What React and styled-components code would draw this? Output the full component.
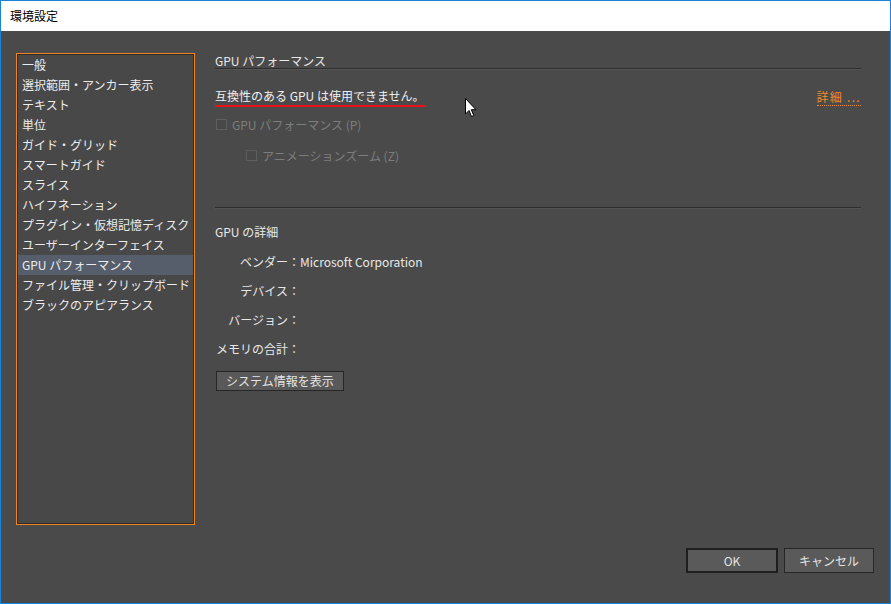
import React from 'react';
import styled, { createGlobalStyle } from 'styled-components';

const GlobalStyle = createGlobalStyle`
  html, body {
    margin: 0;
    padding: 0;
    background: #ffffff;
  }
  body {
    font-family: "Noto Sans CJK JP", "Noto Sans", sans-serif;
    font-size: 12px;
  }
`

const Window = styled.div`
  position: relative;
  box-sizing: border-box;
  width: 891px;
  height: 604px;
  border: 1px solid #1883d7;
  display: flex;
  flex-direction: column;
  background: #4a4a4a;
`

const TitleBar = styled.div`
  height: 30px;
  flex: none;
  background: #ffffff;
  color: #000000;
  display: flex;
  align-items: center;
  padding-left: 9px;
  font-size: 12px;
  line-height: 16px;
`

const Body = styled.div`
  flex: 1;
  display: flex;
  flex-direction: column;
  padding: 22px 15px 0 15px;
  color: #e8e8e8;
`

const Top = styled.div`
  display: flex;
  gap: 20px;
`

const Sidebar = styled.div`
  box-sizing: border-box;
  width: 179px;
  height: 472px;
  border: 1px solid #f0861c;
  flex: none;
`

const SidebarInner = styled.div`
  box-sizing: border-box;
  height: 100%;
  border: 1px solid #2c2c2c;
  background: #484848;
`

const NavItem = styled.div`
  height: 20px;
  line-height: 20px;
  padding-left: 4px;
  white-space: nowrap;
  color: #ececec;
  background: ${p => (p.$active ? '#565e6b' : 'transparent')};
`

const Main = styled.div`
  width: 646px;
  display: flex;
  flex-direction: column;
`

const SectionTitle = styled.div`
  height: 15px;
  line-height: 15px;
  border-bottom: 1px solid #2e2e2e;
  box-shadow: 0 1px 0 #545454;
  color: #e8e8e8;
`

const WarnRow = styled.div`
  margin-top: 18px;
  display: flex;
  justify-content: space-between;
  align-items: flex-start;
  line-height: 18px;
  height: 22px;
`

const Warning = styled.span`
  padding-right: 1px;
  border-bottom: 2px solid #e8111a;
  color: #f0f0f0;
`

const DetailLink = styled.span`
  color: #ef8a2a;
  border-bottom: 1px dotted #ef8a2a;
  line-height: 17px;
  margin-top: 1px;
  letter-spacing: 1.3px;
`

const CheckRow = styled.div`
  display: flex;
  align-items: center;
  gap: 5px;
  height: 30px;
  margin-top: ${p => p.$gap || 0}px;
  padding-left: ${p => p.$indent || 1}px;
  color: #7d7d7d;
`

const Box = styled.span`
  box-sizing: border-box;
  width: 11px;
  height: 11px;
  border: 1px solid #5e5e5e;
  background: #484848;
`

const Divider = styled.div`
  margin-top: 37px;
  height: 1px;
  background: #2e2e2e;
  box-shadow: 0 1px 0 #545454;
`

const SubTitle = styled.div`
  margin-top: 16px;
  line-height: 16px;
  color: #e8e8e8;
`

const InfoGrid = styled.div`
  margin-top: 14px;
  display: grid;
  grid-template-columns: 85px auto;
  grid-auto-rows: 29px;
  align-items: start;
  line-height: 16px;
`

const InfoLabel = styled.div`
  text-align: right;
  white-space: nowrap;
  color: #e8e8e8;
`

const InfoValue = styled.div`
  color: #e8e8e8;
`

const SmallButton = styled.button`
  align-self: flex-start;
  margin-left: 1px;
  margin-top: 1px;
  box-sizing: border-box;
  height: 20px;
  padding: 0 9px;
  font-family: inherit;
  font-size: 12px;
  line-height: 16px;
  color: #e4e4e4;
  background: #595959;
  border: 1px solid #262626;
`

const Footer = styled.div`
  margin-top: 23px;
  display: flex;
  justify-content: flex-end;
  gap: 6px;
  padding-right: 1px;
`

const DialogButton = styled.button`
  box-sizing: border-box;
  width: ${p => p.$w}px;
  height: 25px;
  font-family: inherit;
  font-size: 12px;
  color: #e4e4e4;
  background: #5a5a5a;
  border: ${p => (p.$primary ? '2px solid #1f1f1f' : '1px solid #262626')};
`

const Cursor = styled.svg`
  position: absolute;
  left: 464px;
  top: 97px;
`

const navItems = [
  '一般',
  '選択範囲・アンカー表示',
  'テキスト',
  '単位',
  'ガイド・グリッド',
  'スマートガイド',
  'スライス',
  'ハイフネーション',
  'プラグイン・仮想記憶ディスク',
  'ユーザーインターフェイス',
  'GPU パフォーマンス',
  'ファイル管理・クリップボード',
  'ブラックのアピアランス',
];

const info = [
  ['ベンダー：', 'Microsoft Corporation'],
  ['デバイス：', ''],
  ['バージョン：', ''],
  ['メモリの合計：', ''],
];

export default function App() {
  return (
    <>
      <GlobalStyle />
      <Window>
        <TitleBar>環境設定</TitleBar>
        <Body>
          <Top>
            <Sidebar>
              <SidebarInner>
                {navItems.map(item => (
                  <NavItem key={item} $active={item === 'GPU パフォーマンス'}>{item}</NavItem>
                ))}
              </SidebarInner>
            </Sidebar>
            <Main>
              <SectionTitle>GPU パフォーマンス</SectionTitle>
              <WarnRow>
                <Warning>互換性のある GPU は使用できません。</Warning>
                <DetailLink>詳細 ...</DetailLink>
              </WarnRow>
              <CheckRow>
                <Box />
                <span>GPU パフォーマンス (P)</span>
              </CheckRow>
              <CheckRow $indent={31} $gap={1}>
                <Box />
                <span>アニメーションズーム (Z)</span>
              </CheckRow>
              <Divider />
              <SubTitle>GPU の詳細</SubTitle>
              <InfoGrid>
                {info.map(([label, value]) => (
                  <React.Fragment key={label}>
                    <InfoLabel>{label}</InfoLabel>
                    <InfoValue>{value}</InfoValue>
                  </React.Fragment>
                ))}
              </InfoGrid>
              <SmallButton>システム情報を表示</SmallButton>
            </Main>
          </Top>
          <Footer>
            <DialogButton $primary $w={92}>OK</DialogButton>
            <DialogButton $w={90}>キャンセル</DialogButton>
          </Footer>
        </Body>
        <Cursor width="13" height="20" viewBox="0 0 13 20">
          <path d="M0.5 0.5 L0.5 16 L4 12.5 L6.5 18.5 L8.8 17.5 L6.3 11.7 L11 11.7 Z" fill="#ffffff" stroke="#000000" strokeWidth="1" />
        </Cursor>
      </Window>
    </>
  );
}
